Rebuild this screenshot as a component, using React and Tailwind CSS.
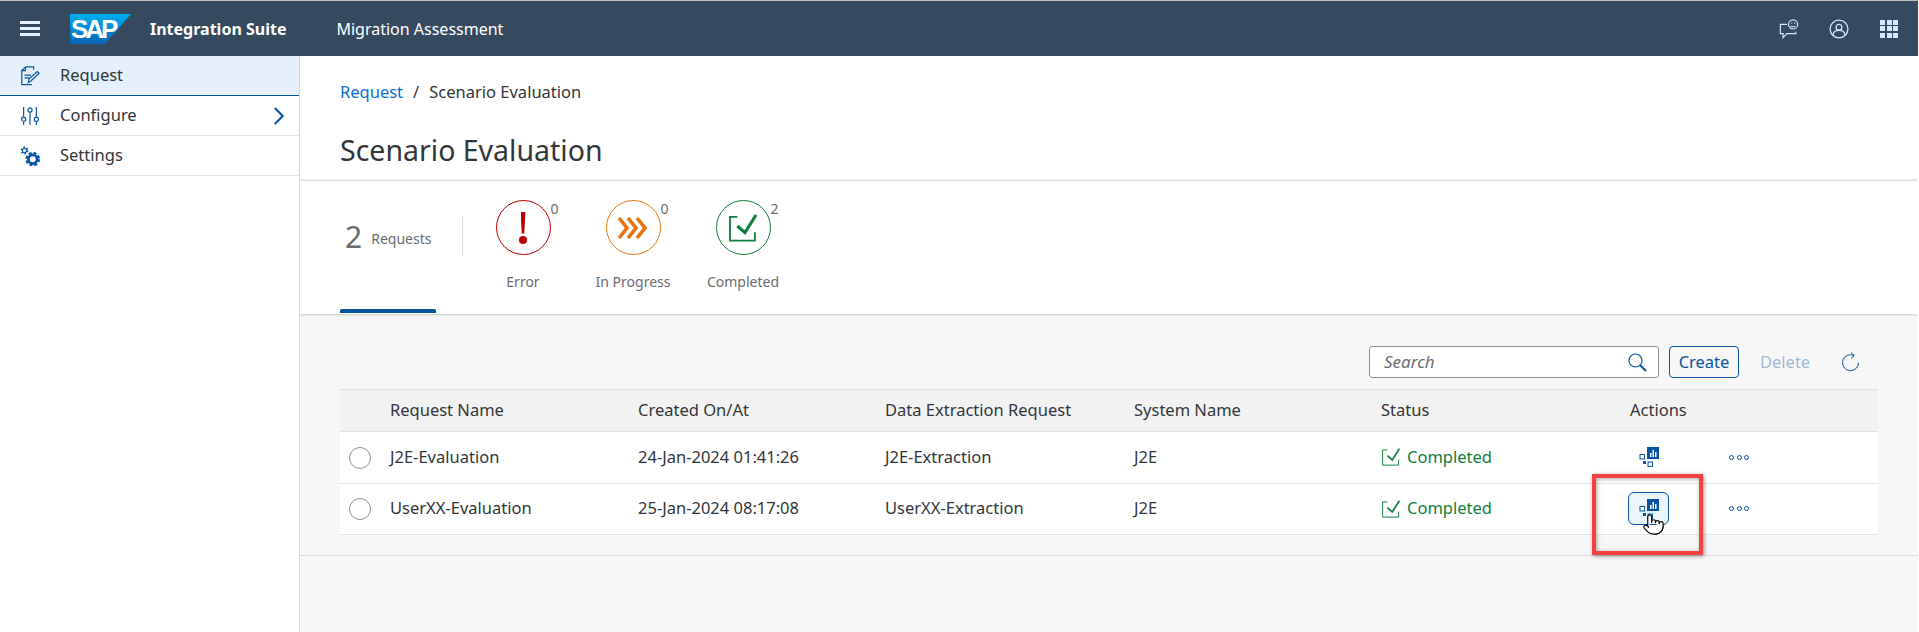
import { ChevronRight, Pointer } from 'lucide-react'

const font = "font-['Noto_Sans','Open_Sans',sans-serif]"

const columns = 'grid grid-cols-[50px_248px_247px_249px_247px_249px_1fr] items-center'

const rows = [
  { name: 'J2E-Evaluation', created: '24-Jan-2024 01:41:26', extraction: 'J2E-Extraction', height: 'h-[52px]' },
  { name: 'UserXX-Evaluation', created: '25-Jan-2024 08:17:08', extraction: 'UserXX-Extraction', height: 'h-[51px]', active: true },
]

// ─── Icons ────────────────────────────────────────────────────────────────────
function SapLogo() {
  return (
    <div className="relative w-[61px] h-[30px]">
      <svg width="61" height="30" viewBox="0 0 61 30" className="block">
        <defs>
          <linearGradient id="sap" x1="0" y1="0" x2="0" y2="1">
            <stop offset="0" stopColor="#00b0ef" />
            <stop offset="1" stopColor="#0a62b4" />
          </linearGradient>
        </defs>
        <polygon points="0,0 61,0 35,30 0,30" fill="url(#sap)" />
      </svg>
      <span className="absolute left-[1px] top-[1px] text-[26px] leading-[28px] font-bold tracking-[-3px] text-white font-['Liberation_Sans',sans-serif]">
        SAP
      </span>
    </div>
  )
}

function RequestIcon() {
  return (
    <svg width="20" height="20" viewBox="0 0 22 22" fill="none" stroke="#0854a0" strokeWidth="1.3">
      <path d="M6 1h9v3M6 1 2 5v15.500h11" />
      <path d="M6 1v4H2" />
      <path d="M5 10h7M5 13h5" />
      <path d="M9 18l1-4 9-8 2 2-9 8.500z" />
    </svg>
  )
}

function ConfigureIcon() {
  return (
    <svg width="20" height="20" viewBox="0 0 22 22" fill="none" stroke="#0854a0" strokeWidth="1.3">
      <path d="M4 1v11M4 17v4M11 1v1M11 7v14M18 1v11M18 17v4" />
      <circle cx="4" cy="14.500" r="2.300" />
      <circle cx="11" cy="4.500" r="2.300" />
      <circle cx="18" cy="14.500" r="2.300" />
    </svg>
  )
}

function SettingsIcon() {
  return (
    <svg width="20" height="20" viewBox="0 0 22 22" fill="none" stroke="#0854a0">
      <circle cx="14" cy="14.500" r="4.800" strokeWidth="3" />
      <circle cx="14" cy="14.500" r="6.800" strokeWidth="2.600" strokeDasharray="3.300 2.040" />
      <circle cx="5" cy="5" r="2.300" strokeWidth="1.200" />
      <circle cx="5" cy="5" r="3.600" strokeWidth="1.500" strokeDasharray="1.900 1.870" />
    </svg>
  )
}

function FeedbackIcon() {
  return (
    <svg width="20" height="20" viewBox="0 0 22 22" fill="none" stroke="#d1e8ff" strokeWidth="1.300">
      <path d="M9 6H1.500v10h3v4.500l4-4.500h10v-2" />
      <circle cx="15.500" cy="6" r="5" />
      <path d="M13 7.500c1.500 1.500 3.500 1.500 5 0" />
      <path d="M13.500 4.500h1M16.500 4.500h1" />
    </svg>
  )
}

function ProfileIcon() {
  return (
    <svg width="20" height="20" viewBox="0 0 22 22" fill="none" stroke="#d1e8ff" strokeWidth="1.400">
      <circle cx="11" cy="11" r="9.800" />
      <circle cx="11" cy="9" r="3.200" />
      <path d="M4.500 18c0-4 3-5.500 6.500-5.500s6.500 1.500 6.500 5.500" />
    </svg>
  )
}

function GridIcon() {
  return (
    <div className="grid grid-cols-3 gap-[1.500px] w-[18px]">
      {Array.from({ length: 9 }).map((_, i) => (
        <span key={i} className="w-[5px] h-[5px] bg-[#d1e8ff]" />
      ))}
    </div>
  )
}

function AnalysisIcon() {
  return (
    <svg width="20" height="20" viewBox="0 0 20 20">
      <rect x="8" y="0" width="12" height="12" fill="#0854a0" />
      <path d="M11 6h1.500v4H11zM13.500 3h1.500v7h-1.500zM16 5h1.500v5H16z" fill="#fff" />
      <rect x="1" y="7.500" width="4.500" height="4.500" fill="#fff" stroke="#0854a0" strokeWidth="1" />
      <rect x="4" y="14" width="3" height="3" fill="#0854a0" />
      <rect x="9" y="15" width="4.500" height="4.500" fill="#fff" stroke="#0854a0" strokeWidth="1" />
    </svg>
  )
}

function CompletedIcon({ size = 18, stroke = 1.1 }) {
  return (
    <svg width={size} height={size} viewBox="0 0 20 20" fill="none" stroke="#107e3e" strokeWidth={stroke}>
      <path d="M6 2.100H.7V19h17.800v-6" />
      <path d="M6 8.600l5.400 4.700L19.300 .7" strokeWidth={stroke * 1.7} />
    </svg>
  )
}

function Dots() {
  return (
    <div className="flex gap-[2.500px]">
      <span className="w-[5px] h-[5px] rounded-full border border-[#0854a0]" />
      <span className="w-[5px] h-[5px] rounded-full border border-[#0854a0]" />
      <span className="w-[5px] h-[5px] rounded-full border border-[#0854a0]" />
    </div>
  )
}

// ─── Sidebar ──────────────────────────────────────────────────────────────────
function Sidebar() {
  return (
    <aside className="w-[300px] shrink-0 bg-white border-r border-[#d9d9d9] text-[16.500px] text-[#32363a]">
      <div className="h-[40px] flex items-center gap-[20px] pl-[20px] bg-[#e5f0fa] border-b border-[#0854a0]">
        <RequestIcon />
        <span>Request</span>
      </div>
      <div className="h-[40px] flex items-center gap-[20px] pl-[20px] border-b border-[#e5e5e5]">
        <ConfigureIcon />
        <span className="flex-1">Configure</span>
        <ChevronRight size={30} strokeWidth={1.6} className="text-[#0854a0] mr-[5px]" />
      </div>
      <div className="h-[40px] flex items-center gap-[20px] pl-[20px] border-b border-[#e5e5e5]">
        <SettingsIcon />
        <span>Settings</span>
      </div>
    </aside>
  )
}

// ─── Status summary tabs ──────────────────────────────────────────────────────
function StatusTab({ label, count, color, children }) {
  return (
    <div className="w-[110px] flex flex-col items-center">
      <div className="relative w-[55px] h-[55px]">
        <div className={`w-[55px] h-[55px] rounded-full border flex items-center justify-center ${color}`}>
          {children}
        </div>
        <span className="absolute left-[55px] top-[-2px] text-[14px] text-[#6a6d70]">{count}</span>
      </div>
      <span className="mt-[17px] text-[14px] leading-[20px] text-[#6a6d70]">{label}</span>
    </div>
  )
}

function TabBar() {
  return (
    <section className="h-[133px] bg-white shadow-[0_0_3px_rgba(0,0,0,0.35)] [clip-path:inset(-4px_0)] relative">
      <div className="flex pl-[40px] pt-[19px]">
        <div className="w-[122px] h-[56px] mt-[9px] pl-[5px] flex items-center gap-[9px] text-[#6a6d70]">
          <span className="text-[30px] leading-none">2</span>
          <span className="text-[14px] mt-[2px]">Requests</span>
        </div>
        <span className="w-px h-[40px] mt-[16px] bg-[#d9d9d9] mr-[5px]" />
        <div className="flex">
          <StatusTab label="Error" count="0" color="border-[#bb0000]">
            <div className="flex flex-col items-center">
              <span className="w-[5px] h-[22px] bg-[#bb0000] [clip-path:polygon(0_0,100%_0,75%_100%,25%_100%)]" />
              <span className="w-[8px] h-[8px] rounded-full bg-[#bb0000] mt-[2px]" />
            </div>
          </StatusTab>
          <StatusTab label="In Progress" count="0" color="border-[#e9730c]">
            <svg width="32" height="24" viewBox="0 0 32 24" fill="none" stroke="#e9730c" strokeWidth="3.600">
              <path d="M2 2l8 10-8 10M11 2l8 10-8 10M20 2l8 10-8 10" />
            </svg>
          </StatusTab>
          <StatusTab label="Completed" count="2" color="border-[#107e3e]">
            <CompletedIcon size={28} stroke={1.3} />
          </StatusTab>
        </div>
      </div>
      <div className="absolute left-[40px] bottom-[1px] w-[96px] h-[4px] rounded-t-[2px] bg-[#0854a0]" />
    </section>
  )
}

// ─── Table ────────────────────────────────────────────────────────────────────
function Toolbar() {
  return (
    <div className="h-[75px] pt-[32px] flex items-start pl-[1069px]">
      <div className="w-[290px] h-[32px] bg-white border border-[#89919a] rounded-[3px] flex items-center justify-between pl-[14px] pr-[11px]">
        <span className="text-[17px] italic text-[#6a6d70]">Search</span>
        <svg width="19" height="19" viewBox="0 0 19 19" fill="none" stroke="#0854a0" strokeWidth="1.200">
          <circle cx="7.500" cy="7.500" r="6.500" />
          <path d="M12 12l6 6" strokeWidth="2" />
        </svg>
      </div>
      <button className="ml-[10px] w-[70px] h-[32px] rounded-[4px] border border-[#0854a0] text-[16.500px] text-[#0854a0]">
        Create
      </button>
      <span className="ml-[21px] w-[50px] h-[32px] flex items-center text-[16.500px] text-[#0854a0]/40">Delete</span>
      <svg width="20" height="21" viewBox="0 0 20 21" fill="none" stroke="#0854a0" strokeWidth="1" className="ml-[30px] mt-[6px]">
        <path d="M14 3.500a8 8 0 1 0 4.500 7" />
        <path d="M11 0.500l3.300 3-3.300 3" />
      </svg>
    </div>
  )
}

function Row({ row }) {
  return (
    <div className={`${columns} ${row.height} pb-[1px] bg-white border-b border-[#e5e5e5] text-[16.500px] text-[#32363a]`}>
      <span className="ml-[9px] mt-[1px] w-[22px] h-[22px] rounded-full border border-[#89919a] bg-white" />
      <span>{row.name}</span>
      <span>{row.created}</span>
      <span>{row.extraction}</span>
      <span>J2E</span>
      <span className="flex items-center gap-[7px] ml-[1px] text-[#107e3e]">
        <CompletedIcon />
        Completed
      </span>
      <span className="flex items-center">
        <span className={`w-[41px] h-[33px] flex items-center justify-center rounded-[6px] border -ml-[2px] ${row.active ? 'bg-[#ebf5fe] border-[#0854a0]' : 'border-transparent'}`}>
          <AnalysisIcon />
        </span>
        <span className="ml-[60px]"><Dots /></span>
      </span>
    </div>
  )
}

function RequestTable() {
  return (
    <div className="mx-[40px]">
      <div className={`${columns} h-[43px] bg-[#f2f2f2] border-y border-[#e0e0e0] text-[16.500px] text-[#32363a]`}>
        <span />
        <span>Request Name</span>
        <span>Created On/At</span>
        <span>Data Extraction Request</span>
        <span>System Name</span>
        <span>Status</span>
        <span>Actions</span>
      </div>
      {rows.map((row) => (
        <Row key={row.name} row={row} />
      ))}
    </div>
  )
}

export default function App() {
  return (
    <div className={`relative h-[632px] overflow-hidden bg-white pr-[1px] border-t border-[#bdbdbd] ${font}`}>
      {/* Shell header */}
      <header className="h-[55px] bg-[#354a5f] flex items-center text-white text-[16px]">
        <div className="ml-[20px] w-[20px] flex flex-col gap-[3px]">
          <span className="h-[3px] bg-[#e6f2ff]" />
          <span className="h-[3px] bg-[#e6f2ff]" />
          <span className="h-[3px] bg-[#e6f2ff]" />
        </div>
        <div className="ml-[30px]"><SapLogo /></div>
        <span className="ml-[19px] font-bold">Integration Suite</span>
        <span className="ml-[50px]">Migration Assessment</span>
        <div className="ml-auto flex items-center">
          <FeedbackIcon />
          <span className="ml-[30px]"><ProfileIcon /></span>
          <span className="ml-[31px] mr-[20px]"><GridIcon /></span>
        </div>
      </header>

      <div className="flex h-[576px]">
        <Sidebar />
        <main className="flex-1 bg-[#f7f7f7]">
          <section className="h-[125px] bg-white pl-[40px] pt-[24px]">
            <div className="text-[16.500px] leading-[24px] text-[#32363a]">
              <span className="text-[#0a6ed1]">Request</span>
              <span className="mx-[10px]">/</span>
              Scenario Evaluation
            </div>
            <h1 className="mt-[25px] text-[28.500px] leading-[42px] text-[#32363a]">Scenario Evaluation</h1>
          </section>
          <TabBar />
          <div className="h-[242px] border-b border-[#d9d9d9]">
            <Toolbar />
            <RequestTable />
          </div>
        </main>
      </div>

      {/* Annotation around the hovered action */}
      <div className="absolute left-[1592px] top-[473px] w-[111px] h-[81px] border-[4px] border-[#f44040] shadow-[1px_1px_4px_rgba(0,0,0,0.45),inset_1px_1px_4px_rgba(0,0,0,0.35)]" />
      <Pointer size={23} strokeWidth={1.2} className="absolute left-[1642px] top-[512px] text-black fill-white" />
    </div>
  )
}
